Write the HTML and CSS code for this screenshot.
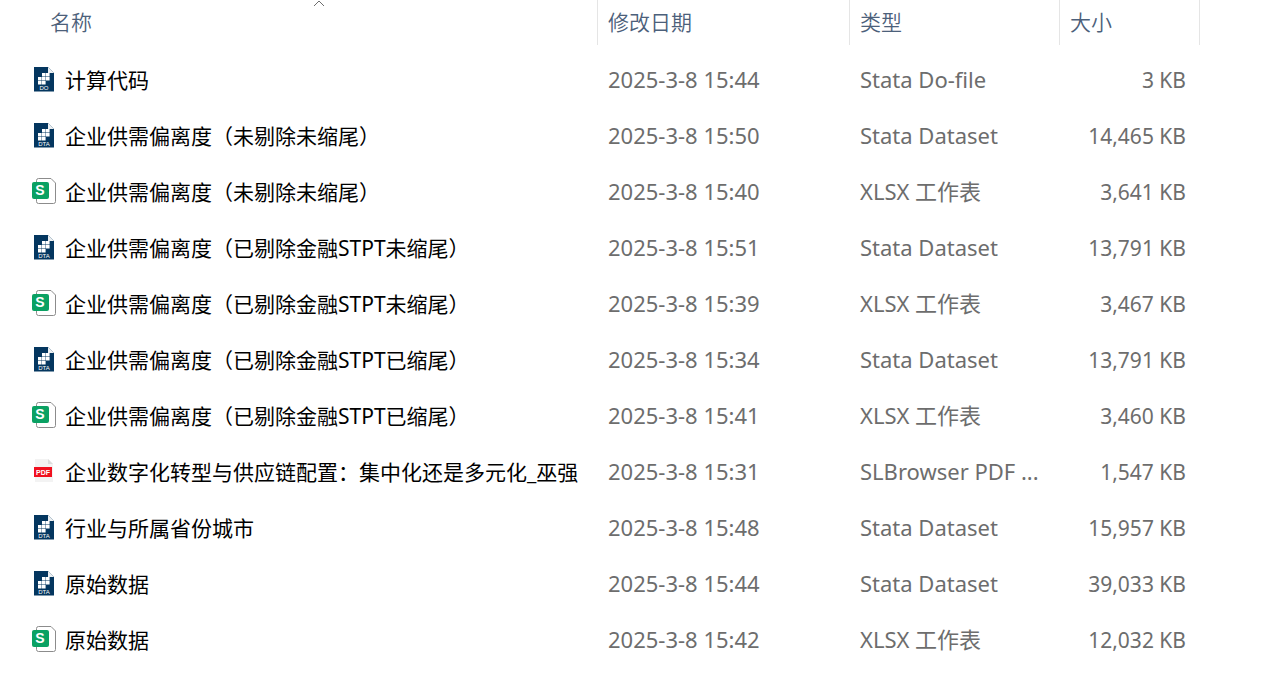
FILE: index.html
```
<!DOCTYPE html>
<html lang="zh-CN">
<head>
  <meta charset="UTF-8">
  <meta name="viewport" content="width=device-width, initial-scale=1">
  <title>文件列表</title>
  <link rel="stylesheet" href="styles.css">
</head>
<body>
  <!-- Iconos -->
  <svg class="sprite" aria-hidden="true">
    <symbol id="stata" viewBox="0 0 28 30">
      <path d="M4 3h14l6 6v18.500H4z" fill="#04365f"/>
      <path d="M18 3v6h6z" fill="#eceff1"/>
      <path d="M12 9h3.600v3.600H12zM16 9h3.600v3.600H16zM8 13h3.600v3.600H8zM12 13h3.600v3.600H12zM16 13h3.600v3.600H16zM8 17h3.600v3.600H8zM12 17h3.600v3.600H12z" fill="#fff"/>
    </symbol>
    <symbol id="xlsx" viewBox="0 0 28 30">
      <path d="M8.500 2.500H21l4.500 4.500v18.500q0 2-2 2h-15q-2 0-2-2v-21q0-2 2-2z" fill="#fff" stroke="#8c8c8c"/>
      <rect x="2" y="6" width="17" height="17" rx="2" fill="#0aa163"/>
    </symbol>
    <symbol id="pdf" viewBox="0 0 28 30">
      <path d="M5 3h13l5 5v18H5z" fill="#f3f3f3"/>
      <path d="M18 3v5h5z" fill="#dcdcdc"/>
      <rect x="4" y="11" width="18" height="10" fill="#f0101f"/>
    </symbol>
  </svg>

  <table class="files">
    <colgroup>
      <col>
      <col class="col-date">
      <col class="col-type">
      <col class="col-size">
      <col class="col-rest">
    </colgroup>
    <thead>
      <tr>
        <th class="name" aria-sort="ascending"><button type="button">名称<svg class="caret" viewBox="0 0 12 7" aria-hidden="true"><path d="M1 6l5-5 5 5"/></svg></button></th>
        <th><button type="button">修改日期</button></th>
        <th><button type="button">类型</button></th>
        <th><button type="button">大小</button></th>
        <td></td>
      </tr>
    </thead>
    <tbody id="lista"></tbody>
  </table>

  <script src="script.js"></script>
</body>
</html>
```
FILE: styles.css
```
body {
  margin: 0;
  background: #fff;
  font-family: "Noto Sans", "Noto Sans CJK SC", sans-serif;
  font-size: 21px;
  line-height: 28px;
  color: #6d6d6d;
}

.sprite {
  display: none;
}

.files {
  width: 100%;
  table-layout: fixed;
  border-collapse: collapse;
}

.col-date { width: 252px; }
.col-type { width: 210px; }
.col-size { width: 140px; }
.col-rest { width: 77px; }

/* Cabecera */
.files th {
  padding: 0 0 7px;
}

.files button {
  display: block;
  position: relative;
  width: 100%;
  height: 45px;
  padding: 0 10px 2px;
  border: 0;
  border-right: 1px solid #e5e5e5;
  background: none;
  font: inherit;
  font-weight: 350;
  text-align: left;
  color: #4c607a;
}

.files .name button {
  padding-left: 50px;
}

.caret {
  position: absolute;
  top: 0;
  right: 50%;
  width: 12px;
  height: 7px;
  margin-right: -26px;
  fill: none;
  stroke: #6d6d6d;
}

/* Filas */
.files td {
  height: 56px;
  padding: 0 10px;
  white-space: nowrap;
  overflow: hidden;
  text-overflow: ellipsis;
  box-sizing: border-box;
}

.files thead td {
  height: auto;
}

.files .file {
  padding: 0 0 0 30px;
  color: #000;
}

.file div {
  display: flex;
  align-items: center;
  gap: 7px;
}

.icon {
  flex: none;
  width: 28px;
  height: 30px;
  margin-bottom: 2px;
  font-family: "Liberation Sans", Arial, sans-serif;
  font-weight: 700;
  fill: #fff;
  text-anchor: middle;
}

.icon .stata {
  font-size: 6px;
  font-weight: 400;
}

.icon .xlsx { font-size: 14px; }
.icon .pdf { font-size: 7px; }

.files .date,
.files .type {
  padding-bottom: 2px;
  font-size: 22px;
}

.files .size {
  padding-right: 14px;
  text-align: right;
}
```
FILE: script.js
```
const archivos = [
  ["do", "计算代码", "15:44", "3 KB"],
  ["dta", "企业供需偏离度（未剔除未缩尾）", "15:50", "14,465 KB"],
  ["xlsx", "企业供需偏离度（未剔除未缩尾）", "15:40", "3,641 KB"],
  ["dta", "企业供需偏离度（已剔除金融STPT未缩尾）", "15:51", "13,791 KB"],
  ["xlsx", "企业供需偏离度（已剔除金融STPT未缩尾）", "15:39", "3,467 KB"],
  ["dta", "企业供需偏离度（已剔除金融STPT已缩尾）", "15:34", "13,791 KB"],
  ["xlsx", "企业供需偏离度（已剔除金融STPT已缩尾）", "15:41", "3,460 KB"],
  ["pdf", "企业数字化转型与供应链配置：集中化还是多元化_巫强", "15:31", "1,547 KB"],
  ["dta", "行业与所属省份城市", "15:48", "15,957 KB"],
  ["dta", "原始数据", "15:44", "39,033 KB"],
  ["xlsx", "原始数据", "15:42", "12,032 KB"]
];

// icono, texto del icono, altura del texto, centro, nombre del tipo
const tipos = {
  do: ["stata", "DO", 26, 14, "Stata Do-file"],
  dta: ["stata", "DTA", 26, 14, "Stata Dataset"],
  xlsx: ["xlsx", "S", 19, 10, "XLSX 工作表"],
  pdf: ["pdf", "PDF", 19, 13, "SLBrowser PDF ..."]
};

document.getElementById("lista").innerHTML = archivos.map(([tipo, nombre, hora, peso]) => {
  const [icono, texto, y, x, descripcion] = tipos[tipo];
  return `<tr>
    <td class="file"><div><svg class="icon" viewBox="0 0 28 30" aria-hidden="true"><use href="#${icono}"/><text class="${icono}" x="${x}" y="${y}">${texto}</text></svg><span>${nombre}</span></div></td>
    <td class="date">2025-3-8 ${hora}</td>
    <td class="type">${descripcion}</td>
    <td class="size">${peso}</td>
    <td></td>
  </tr>`;
}).join("");
```
